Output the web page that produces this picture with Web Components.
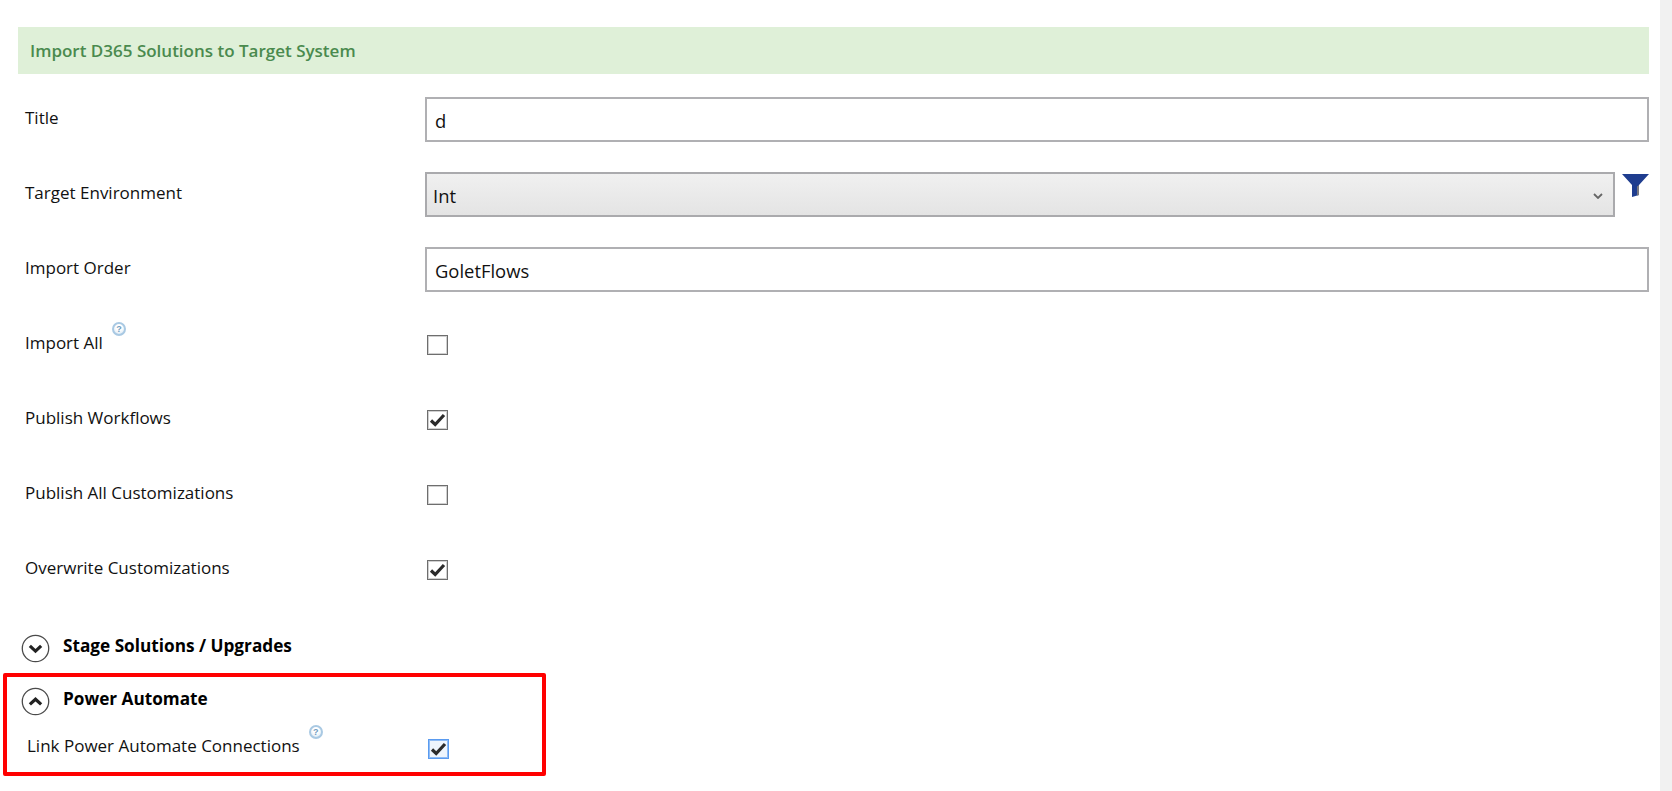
<!DOCTYPE html>
<html>
<head>
<meta charset="utf-8">
<title>Import D365 Solutions</title>
<style>
  html, body { margin: 0; height: 100%; background: #fff; }
  body { font-family: "Open Sans", "Noto Sans", "Liberation Sans", sans-serif; color: #111; }
</style>
</head>
<body>
<form-page>
  <section-banner>Import D365 Solutions to Target System</section-banner>
  <form-row label="Title"><text-field>d</text-field></form-row>
  <form-row label="Target Environment"><select-field>Int</select-field></form-row>
  <form-row label="Import Order"><text-field>GoletFlows</text-field></form-row>
  <form-row label="Import All" help><check-box></check-box></form-row>
  <form-row label="Publish Workflows"><check-box checked></check-box></form-row>
  <form-row label="Publish All Customizations"><check-box></check-box></form-row>
  <form-row label="Overwrite Customizations"><check-box checked></check-box></form-row>
  <collapse-header class="stage">Stage Solutions / Upgrades</collapse-header>
  <red-box>
    <collapse-header open>Power Automate</collapse-header>
    <link-row><check-box checked focused></check-box></link-row>
  </red-box>
</form-page>

<script>
class FormPage extends HTMLElement {
  constructor() {
    super();
    this.attachShadow({mode: 'open'}).innerHTML = `
    <style>
      :host { display: flex; min-height: 100vh; box-sizing: border-box; }
      .main { flex: 1; min-width: 0; padding: 27px 11px 0 18px; }
      .rail { width: 12px; background: #f1f1f1; }
      ::slotted(.stage) { margin-top: 27px; margin-left: 3px; }
    </style>
    <div class="main"><slot></slot></div>
    <div class="rail"></div>
    `;
  }
}

class SectionBanner extends HTMLElement {
  constructor() {
    super();
    this.attachShadow({mode: 'open'}).innerHTML = `
    <style>
      :host {
        display: flex; align-items: center; height: 47px; margin-bottom: 8px;
        padding-left: 12px; background: #dff0d8; color: #4a8a4e;
        font-size: 17px; font-weight: 600;
      }
    </style>
    <slot></slot>
    `;
  }
}

class HelpMark extends HTMLElement {
  constructor() {
    super();
    this.attachShadow({mode: 'open'}).innerHTML = `
    <style>
      :host {
        display: flex; align-items: center; justify-content: center; flex: none;
        box-sizing: border-box; width: 14px; height: 14px; border: 2px solid #a9c9e3; border-radius: 50%;
        background: radial-gradient(circle at 50% 35%, #fff 35%, #cfe1f0 100%);
        color: #6f9cc0; font: bold 9px/1 "Liberation Sans", sans-serif;
      }
    </style>
    ?
    `;
  }
}

class FormRow extends HTMLElement {
  constructor() {
    super();
    const help = this.hasAttribute('help') ? '<help-mark></help-mark>' : '';
    this.attachShadow({mode: 'open'}).innerHTML = `
    <style>
      :host { display: grid; grid-template-columns: 407px 1fr; align-items: center; height: 75px; }
      .label { display: flex; padding-left: 7px; font-size: 17px; position: relative; top: -2px; }
      help-mark { margin: -9px 0 0 9px; }
    </style>
    <div class="label"><span>${this.getAttribute('label')}</span>${help}</div>
    <div><slot></slot></div>
    `;
  }
}

class TextField extends HTMLElement {
  constructor() {
    super();
    this.attachShadow({mode: 'open'}).innerHTML = `
    <style>
      :host {
        display: flex; align-items: center; box-sizing: border-box; height: 45px;
        padding: 2px 0 0 8px; border: 2px solid #b0b0b3; background: #fff;
        font-size: 18.4px; color: #111;
      }
    </style>
    <slot></slot>
    `;
  }
}

class SelectField extends HTMLElement {
  constructor() {
    super();
    this.attachShadow({mode: 'open'}).innerHTML = `
    <style>
      :host { display: flex; gap: 7px; align-items: flex-start; }
      .box {
        flex: 1; display: flex; align-items: center; justify-content: space-between;
        box-sizing: border-box; height: 45px; padding: 2px 10px 0 6px;
        border: 2px solid #aaaaad; background: linear-gradient(#f0f0f0, #e4e4e4);
        font-size: 18.4px; color: #111;
      }
      .funnel { margin-top: 2px; }
    </style>
    <div class="box">
      <slot></slot>
      <svg width="10" height="6" viewBox="0 0 10 6"><path d="M1 1l4 4 4-4" fill="none" stroke="#666" stroke-width="1.8"/></svg>
    </div>
    <svg class="funnel" width="27" height="23" viewBox="0 0 27 23">
      <path d="M0 0H27L17 11V21L10 23V11Z" fill="#1f3d8f"/>
      <path d="M15 12.5L17 11V21L15 21.6Z" fill="#77777f"/>
    </svg>
    `;
  }
}

class CheckBox extends HTMLElement {
  constructor() {
    super();
    const mark = this.hasAttribute('checked')
      ? '<svg width="17" height="14" viewBox="0 0 17 14"><path d="M2 7.5l4.2 4L15 2" fill="none" stroke="#2b2b2b" stroke-width="3.2"/></svg>'
      : '';
    this.attachShadow({mode: 'open'}).innerHTML = `
    <style>
      :host {
        display: flex; align-items: center; justify-content: center; box-sizing: border-box;
        width: 21px; height: 20px; margin-left: 2px; border: 1px solid #6e6e6e; background: #fff;
        box-shadow: inset 0 0 0 1px #d0d0d0;
      }
      :host([focused]) { border-color: #5a9bf0; background: #eef5fd; box-shadow: inset 0 0 0 1px #8fbcf5; }
    </style>
    ${mark}
    `;
  }
}

class CollapseHeader extends HTMLElement {
  constructor() {
    super();
    const arrow = this.hasAttribute('open') ? 'M5.5 10.8L9 7.6l3.5 3.2' : 'M5.5 7.4L9 10.6l3.5-3.2';
    this.attachShadow({mode: 'open'}).innerHTML = `
    <style>
      :host { display: flex; align-items: center; height: 28px; font-size: 17.2px; font-weight: 700; color: #000; }
      svg { flex: none; margin-right: 13px; }
      span { position: relative; top: -3px; }
    </style>
    <svg width="29" height="29" viewBox="0 0 18 18">
      <circle cx="9" cy="9" r="8.2" fill="#fff" stroke="#4a4a4a" stroke-width=".8"/>
      <path d="${arrow}" fill="none" stroke="#222" stroke-width="2"/>
    </svg>
    <span><slot></slot></span>
    `;
  }
}

class RedBox extends HTMLElement {
  constructor() {
    super();
    this.attachShadow({mode: 'open'}).innerHTML = `
    <style>
      :host {
        display: block; box-sizing: border-box; width: 543px; height: 103px; margin: 11px 0 0 -15px;
        padding: 10px 0 0 14px; border: 4px solid #f00; border-radius: 2px;
      }
    </style>
    <slot></slot>
    `;
  }
}

class LinkRow extends HTMLElement {
  constructor() {
    super();
    this.attachShadow({mode: 'open'}).innerHTML = `
    <style>
      :host { display: flex; align-items: flex-start; margin-top: 24px; margin-left: 6px; height: 20px; }
      .label { display: flex; width: 399px; font-size: 17px; }
      span { position: relative; top: -5px; }
      help-mark { margin: -14px 0 0 9px; }
    </style>
    <div class="label"><span>Link Power Automate Connections</span><help-mark></help-mark></div>
    <slot></slot>
    `;
  }
}

customElements.define('help-mark', HelpMark);
customElements.define('form-page', FormPage);
customElements.define('section-banner', SectionBanner);
customElements.define('form-row', FormRow);
customElements.define('text-field', TextField);
customElements.define('select-field', SelectField);
customElements.define('check-box', CheckBox);
customElements.define('collapse-header', CollapseHeader);
customElements.define('red-box', RedBox);
customElements.define('link-row', LinkRow);
</script>
</body>
</html>
